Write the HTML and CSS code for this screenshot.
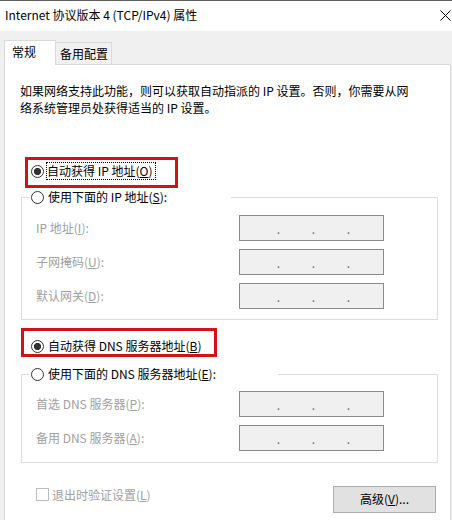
FILE: index.html
```html
<!DOCTYPE html>
<html lang="zh-CN">
<head>
<meta charset="utf-8">
<title>Internet 协议版本 4 (TCP/IPv4) 属性</title>
<link rel="stylesheet" href="styles.css">
</head>
<body>
<div class="window">
  <header class="titlebar">
    <span class="title">Internet 协议版本 4 (TCP/IPv4) 属性</span>
    <span class="close"><svg width="11" height="11" viewBox="0 0 11 11"><path d="M0.5 0.5 L10.5 10.5 M10.5 0.5 L0.5 10.5" stroke="#000" stroke-width="1" fill="none"/></svg></span>
  </header>
  <nav class="tabs">
    <div class="tab tab-active">常规</div>
    <div class="tab tab-other">备用配置</div>
  </nav>
  <main class="panel">
    <p class="desc">如果网络支持此功能，则可以获取自动指派的 IP 设置。否则，你需要从网<br>络系统管理员处获得适当的 IP 设置。</p>

    <div class="radio-row row-ip-auto">
      <span class="radio checked"></span>
      <span class="focus">自动获得 IP 地址(<u>O</u>)</span>
      <span class="mark mark-ip"></span>
    </div>

    <fieldset class="group group-ip">
      <legend class="legend legend-ip">
        <span class="legend-inner"><span class="radio"></span><span class="rtext">使用下面的 IP 地址(<u>S</u>):</span></span>
      </legend>
      <div class="fields">
        <span class="flabel">IP 地址(<u>I</u>):</span>
        <div class="ip"><span>.</span><span>.</span><span>.</span></div>
        <span class="flabel">子网掩码(<u>U</u>):</span>
        <div class="ip"><span>.</span><span>.</span><span>.</span></div>
        <span class="flabel">默认网关(<u>D</u>):</span>
        <div class="ip"><span>.</span><span>.</span><span>.</span></div>
      </div>
    </fieldset>

    <div class="radio-row row-dns-auto">
      <span class="radio checked"></span>
      <span class="rtext">自动获得 DNS 服务器地址(<u>B</u>)</span>
      <span class="mark mark-dns"></span>
    </div>

    <fieldset class="group group-dns">
      <legend class="legend legend-dns">
        <span class="legend-inner"><span class="radio"></span><span class="rtext">使用下面的 DNS 服务器地址(<u>E</u>):</span></span>
      </legend>
      <div class="fields">
        <span class="flabel">首选 DNS 服务器(<u>P</u>):</span>
        <div class="ip"><span>.</span><span>.</span><span>.</span></div>
        <span class="flabel">备用 DNS 服务器(<u>A</u>):</span>
        <div class="ip"><span>.</span><span>.</span><span>.</span></div>
      </div>
    </fieldset>

    <div class="bottom-row">
      <span class="check-label"><span class="checkbox"></span><span class="ctext">退出时验证设置(<u>L</u>)</span></span>
      <button class="btn" type="button">高级(<u>V</u>)...</button>
    </div>
  </main>
</div>
</body>
</html>
```

FILE: styles.css
```css
* {
  box-sizing: border-box;
}

html,
body {
  margin: 0;
  padding: 0;
}

body {
  width: 452px;
  height: 520px;
  overflow: hidden;
  background: #f0f0f0;
  font-family: "Noto Sans CJK SC", "Microsoft YaHei", sans-serif;
  font-size: 12px;
  color: #000;
}

.titlebar {
  height: 31px;
  background: #fff;
  border-top: 1px solid #5f5f5f;
  display: flex;
  align-items: center;
  padding: 0 1px 2px 5px;
}

.title {
  flex: 1;
  line-height: 16px;
}

.close {
  display: flex;
  width: 11px;
  height: 11px;
}

.tabs {
  display: flex;
  align-items: flex-end;
  height: 25px;
  margin-top: 9px;
  margin-bottom: -1px;
  padding-left: 4px;
}

.tab {
  position: relative;
  border: 1px solid #d9d9d9;
  line-height: 17px;
  padding-top: 2px;
}

.tab-active {
  width: 52px;
  height: 25px;
  background: #fff;
  border-bottom: none;
  padding-left: 7px;
  z-index: 2;
}

.tab-other {
  width: 57px;
  height: 23px;
  margin-left: -1px;
  background: #f0f0f0;
  border-left-color: transparent;
  padding-left: 4px;
  z-index: 1;
}

.panel {
  display: block;
  height: 470px;
  margin: 0 1px 0 4px;
  background: #fff;
  border: 1px solid #d9d9d9;
  padding: 17px 12px 0 16px;
}

.desc {
  margin: 0 0 0 -1px;
  line-height: 17px;
}

.radio-row {
  position: relative;
  display: flex;
  align-items: center;
  height: 20px;
  padding-left: 10px;
}

.row-ip-auto {
  margin-top: 45px;
}

.row-dns-auto {
  margin-top: 16px;
}

.radio {
  flex: none;
  display: inline-block;
  width: 13px;
  height: 13px;
  border: 1px solid #333;
  border-radius: 50%;
  background: #fff;
}

.radio.checked {
  background: radial-gradient(circle, #333 0, #333 3.3px, #fff 3.9px);
}

.focus {
  margin-left: 2px;
  padding-right: 2px;
  border: 1px dotted #000;
  line-height: 16px;
}

.rtext {
  margin-left: 4px;
  line-height: 16px;
}

.mark {
  position: absolute;
  border: 3px solid #d0121b;
  pointer-events: none;
}

.mark-ip {
  left: 4px;
  top: -4px;
  width: 153px;
  height: 31px;
}

.mark-dns {
  left: 0;
  top: -8px;
  width: 196px;
  height: 29px;
}

.group {
  margin: 0;
  border: 1px solid #dcdcdc;
  padding: 8px 0 10px 8px;
  min-width: 0;
}

.group-ip {
  margin-top: 6px;
}

.group-dns {
  margin-top: 8px;
  padding-top: 7px;
  padding-bottom: 11px;
}

.legend {
  display: block;
  height: 20px;
  padding: 0 0 0 1px;
}

.legend-ip {
  width: 201px;
}

.legend-dns {
  width: 248px;
}

.legend-inner {
  display: flex;
  align-items: center;
  height: 20px;
}

.fields {
  display: grid;
  grid-template-columns: 203px 145px;
  grid-auto-rows: 26px;
  row-gap: 8px;
  margin-left: 6px;
}

.flabel {
  display: flex;
  align-items: center;
  color: #a0a0a0;
  line-height: 16px;
}

.ip {
  display: flex;
  align-items: center;
  height: 26px;
  background: #f0f0f0;
  border: 1px solid #8a8a8a;
  padding-left: 21px;
  padding-top: 1px;
  color: #6d6d6d;
  line-height: 16px;
}

.ip span {
  width: 35px;
  text-align: center;
}

.bottom-row {
  display: flex;
  align-items: flex-start;
  margin-top: 23px;
}

.check-label {
  display: flex;
  align-items: center;
  height: 17px;
  padding-left: 15px;
  color: #a0a0a0;
}

.checkbox {
  display: inline-block;
  width: 13px;
  height: 13px;
  border: 1px solid #bcbcbc;
  background: #fff;
}

.ctext {
  margin-left: 3px;
  line-height: 16px;
}

.btn {
  margin-left: auto;
  margin-right: 2px;
  width: 103px;
  height: 27px;
  padding: 0 0 1px;
  background: #e1e1e1;
  border: 1px solid #adadad;
  border-radius: 0;
  font-family: inherit;
  font-size: 12px;
  color: #000;
  line-height: 16px;
}
```
